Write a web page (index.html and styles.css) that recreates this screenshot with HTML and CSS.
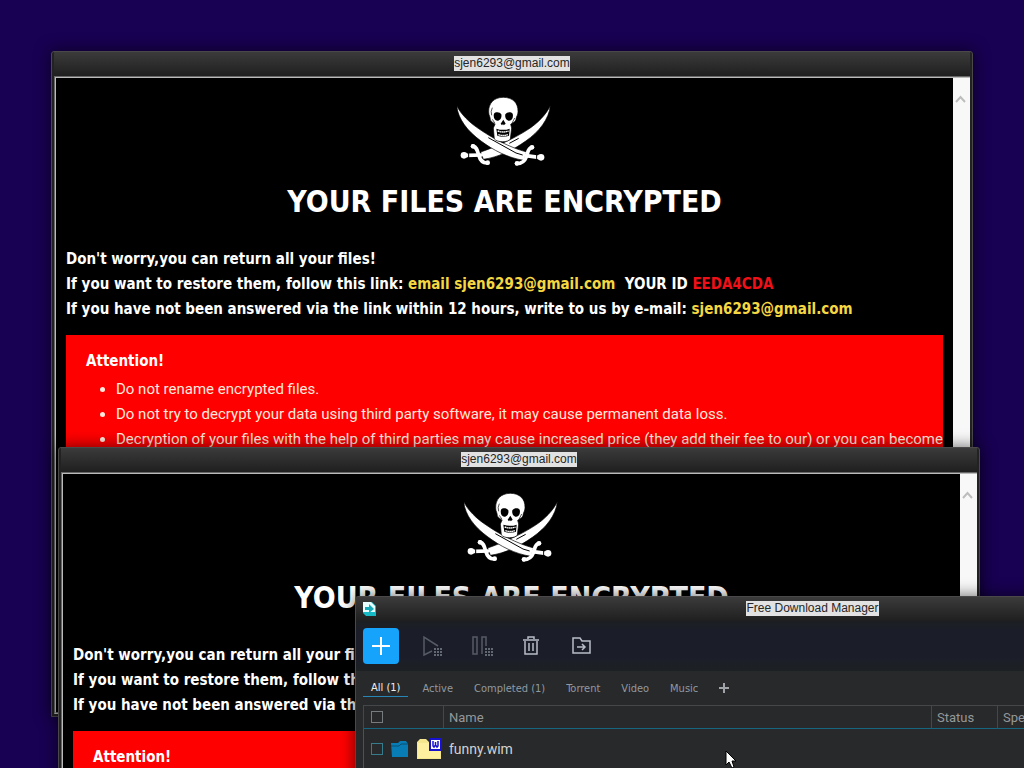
FILE: index.html
```html
<!DOCTYPE html>
<html lang="en">
<head>
    <meta charset="UTF-8">
    <meta name="viewport" content="width=device-width, initial-scale=1.0">
    <title>Desktop</title>
    <link rel="stylesheet" href="styles.css">
</head>
<body>
    <!-- Shared drawings -->
    <svg class="defs" aria-hidden="true">
        <symbol id="skull" viewBox="49 145 288 216">
            <g fill="#fff" stroke="#000" stroke-width="2">
                <path d="M329 174C318 198 292 227 258 248C224 270 168 297 120 313L128 335C172 329 218 307 254 281C296 252 325 214 329 174Z"/>
                <path d="M48 174C60 198 84 224 120 247C155 271 208 300 258 313L250 338C202 331 157 307 121 280C80 250 52 214 48 174Z"/>
            </g>
            <path d="M143 270L226 316L246 322" fill="none" stroke="#000" stroke-width="3"/>
            <path d="M234 272L206 287" fill="none" stroke="#000" stroke-width="3"/>
            <g fill="none" stroke="#fff" stroke-linecap="round">
                <path d="M78 323L122 322M256 324L294 329" stroke-width="11"/>
                <path d="M97 295C109 299 110 309 114 322C118 337 127 347 141 346" stroke-width="11"/>
                <path d="M274 299C260 302 263 314 257 328C252 342 242 348 228 348" stroke-width="11"/>
            </g>
            <path d="M84 315V331M288 320V336" stroke="#000" stroke-width="3"/>
            <g fill="#fff">
                <circle cx="70" cy="323" r="10"/>
                <circle cx="301" cy="329" r="10"/>
                <circle cx="97" cy="296" r="7"/>
                <circle cx="274" cy="299" r="7"/>
                <circle cx="141" cy="345" r="7"/>
                <circle cx="229" cy="347" r="7"/>
            </g>
            <path d="M188 149C159 149 143 168 144 193C144 203 149 207 149 216C150 223 160 224 163 230L158 241L161 274C170 285 202 285 209 274L213 241L210 230C216 225 225 223 226 215C227 205 232 203 232 192C233 166 216 149 188 149Z" fill="#fff" stroke="#000" stroke-width="2"/>
            <path d="M160 198C164 192 178 192 182 200C184 209 179 219 170 219C162 219 157 209 160 198ZM194 200C199 192 211 192 216 198C219 209 214 219 206 219C197 219 192 209 194 200ZM188 216L195 228L189 233L187 229L184 233L180 228Z"/>
            <path d="M167 243Q188 250 207 243L205 264Q188 270 170 264Z"/>
            <path d="M171 250Q188 256 204 250M173 261Q188 266 202 261" fill="none" stroke="#fff" stroke-width="4" stroke-dasharray="5 1"/>
            <path d="M155 180Q149 191 153 203M222 211L214 227M155 215L163 227" fill="none" stroke="#000" stroke-width="2"/>
        </symbol>
        <symbol id="dots" viewBox="0 0 9 9">
            <path d="M0 1h9M0 4h9M0 7h9" stroke="#636973" stroke-width="2" stroke-dasharray="2 1"/>
        </symbol>
    </svg>

    <main class="desktop">
        <section class="window note note-back">
            <header class="titlebar"><span>sjen6293@gmail.com</span></header>
            <div class="note-view">
                <article class="note-page">
                    <svg class="skull"><use href="#skull"/></svg>
                    <h1>YOUR FILES ARE ENCRYPTED</h1>
                    <div class="intro">
                        <p>Don't worry,you can return all your files!</p>
                        <p>If you want to restore them, follow this link: <a href="#">email sjen6293@gmail.com</a> &nbsp;YOUR ID <span class="id">EEDA4CDA</span></p>
                        <p>If you have not been answered via the link within 12 hours, write to us by e-mail: <a href="#">sjen6293@gmail.com</a></p>
                    </div>
                    <div class="attention">
                        <h2>Attention!</h2>
                        <ul>
                            <li>Do not rename encrypted files.</li>
                            <li>Do not try to decrypt your data using third party software, it may cause permanent data loss.</li>
                            <li>Decryption of your files with the help of third parties may cause increased price (they add their fee to our) or you can become</li>
                        </ul>
                    </div>
                </article>
                <div class="scrollbar">
                    <svg width="11" height="8" viewBox="0 0 11 8"><path d="M1 7L5.500 2L10 7" fill="none" stroke="#bdbdbd" stroke-width="2"/></svg>
                </div>
            </div>
        </section>

        <section class="window note note-front">
            <header class="titlebar"><span>sjen6293@gmail.com</span></header>
            <div class="note-view">
                <article class="note-page">
                    <svg class="skull"><use href="#skull"/></svg>
                    <h1>YOUR FILES ARE ENCRYPTED</h1>
                    <div class="intro">
                        <p>Don't worry,you can return all your files!</p>
                        <p>If you want to restore them, follow this</p>
                        <p>If you have not been answered via the</p>
                    </div>
                    <div class="attention">
                        <h2>Attention!</h2>
                    </div>
                </article>
                <div class="scrollbar">
                    <svg width="11" height="8" viewBox="0 0 11 8"><path d="M1 7L5.500 2L10 7" fill="none" stroke="#bdbdbd" stroke-width="2"/></svg>
                </div>
            </div>
        </section>

        <section class="window manager">
            <header class="titlebar">
                <svg class="app-icon" width="13" height="14" viewBox="0 0 13 14">
                    <path d="M0 0H9L13 4V14H3L0 11Z" fill="#16b9c4"/>
                    <path d="M0 0H8L12 4V10H0Z" fill="#e8ffff"/>
                    <path d="M2 5H6V2L11 7L6 11V8H2Z" fill="#16aab8"/>
                </svg>
                <span>Free Download Manager</span>
            </header>
            <div class="toolbar">
                <button class="add" aria-label="Add download">
                    <svg width="18" height="18" viewBox="0 0 18 18"><path d="M9 0V18M0 9H18" stroke="#fff" stroke-width="2"/></svg>
                </button>
                <button aria-label="Start">
                    <svg width="22" height="22" viewBox="0 0 22 22"><path d="M10 16L2 20V2L16 11" fill="none" stroke="#565b65" stroke-width="1.500"/><use href="#dots" x="12" y="13" width="9" height="9"/></svg>
                </button>
                <button aria-label="Pause">
                    <svg width="22" height="22" viewBox="0 0 22 22"><path d="M1 2H5V19H1ZM10 19V2H14V11" fill="none" stroke="#565b65" stroke-width="1.500"/><use href="#dots" x="13" y="13" width="9" height="9"/></svg>
                </button>
                <button aria-label="Delete">
                    <svg width="22" height="22" viewBox="0 0 22 22"><path d="M1 5H17M6 4V2H12V4M3 6V19H15V6M7 8V16M11 8V16" fill="none" stroke="#b8bdc6" stroke-width="1.500"/></svg>
                </button>
                <button aria-label="Move to folder">
                    <svg width="22" height="22" viewBox="0 0 22 22"><path d="M1 18V3H8L10 6H18V18ZM5 12H13M10 9L13 12L10 15" fill="none" stroke="#b8bdc6" stroke-width="1.500"/></svg>
                </button>
            </div>
            <nav class="tabs">
                <button class="active">All (1)</button>
                <button>Active</button>
                <button>Completed (1)</button>
                <button>Torrent</button>
                <button>Video</button>
                <button>Music</button>
                <button aria-label="Add tab"><svg width="10" height="10" viewBox="0 0 10 10"><path d="M5 0V10M0 5H10" stroke="#a0a4a8" stroke-width="2"/></svg></button>
            </nav>
            <table class="downloads">
                <thead>
                    <tr>
                        <th class="pick"><input type="checkbox" aria-label="Select all"></th>
                        <th class="name">Name</th>
                        <th class="status">Status</th>
                        <th>Speed</th>
                    </tr>
                </thead>
                <tbody>
                    <tr>
                        <td>
                            <div class="icons">
                                <input type="checkbox" aria-label="Select funny.wim">
                                <svg width="18" height="16" viewBox="0 0 18 16"><path d="M0 2H7L9 0H15L17 3V16H1Z" fill="#087cb4"/><path d="M0 5H8L10 3H17" fill="none" stroke="#075073" stroke-width="1"/></svg>
                                <svg width="25" height="22" viewBox="0 0 25 22"><path d="M0 4L3 1H9L12 4H24V21H0Z" fill="#f6e68d"/><path d="M1 5H23V20H1Z" fill="#fff0a0"/><path d="M13 1H24V12H13Z" fill="#fff" stroke="#1812cf" stroke-width="2"/><path d="M16 3V8L17 9L18.500 7L20 9L21 8V3M18.500 4V7" fill="none" stroke="#1812cf" stroke-width="1.500"/></svg>
                            </div>
                        </td>
                        <td class="file">funny.wim</td>
                        <td></td>
                        <td></td>
                    </tr>
                </tbody>
            </table>
        </section>

        <svg class="cursor" width="12" height="19" viewBox="0 0 12 19"><path d="M1 1V15L4 12L7 18L9 17L7 11H11Z" fill="#fff" stroke="#000" stroke-width="1"/></svg>
    </main>
</body>
</html>
```
FILE: styles.css
```css
* {
    box-sizing: border-box;
}

body {
    margin: 0;
    font-family: "DejaVu Sans Condensed", "DejaVu Sans", sans-serif;
    background: #180052;
}

h1, h2, p, ul {
    margin: 0;
}

svg {
    display: block;
    flex-shrink: 0;
}

button {
    padding: 0;
    border: none;
    background: none;
    font-family: inherit;
}

.defs {
    position: absolute;
    width: 0;
    height: 0;
}

.desktop {
    position: relative;
    height: 100vh;
    overflow: hidden;
}

/* Windows */
.window {
    position: absolute;
    display: flex;
    flex-direction: column;
    border: 1px solid #4a4848;
    border-radius: 3px 3px 0 0;
    background: #222;
    box-shadow: 0 0 16px rgba(0, 0, 0, 0.6);
}

.titlebar {
    display: flex;
    flex-shrink: 0;
    align-items: center;
    justify-content: center;
    height: 24px;
    padding-bottom: 2px;
    background: linear-gradient(#3b3b3b, #1f1f1f);
    font-family: "Liberation Sans", Arial, sans-serif;
    font-size: 12px;
    line-height: 15px;
}

.titlebar span {
    background: #e2e2e2;
    color: #262626;
}

.note {
    width: 922px;
    height: 666px;
    padding: 0 2px 2px;
}

.note-back {
    left: 51px;
    top: 51px;
}

.note-front {
    left: 58px;
    top: 447px;
}

/* Note page */
.note-view {
    display: flex;
    flex: 1;
    min-height: 0;
    border: 2px groove #bbb;
    border-right: none;
    background: #000;
}

.note-page {
    flex: 1;
    min-width: 0;
    padding: 18px 10px;
    color: #fff;
}

.skull {
    width: 96px;
    height: 72px;
    margin: 0 auto;
}

h1 {
    margin-top: 14px;
    font-size: 30px;
    line-height: 40px;
    text-align: center;
}

.intro {
    margin: 25px 0 13px;
    font-size: 15px;
    font-weight: bold;
    line-height: 25px;
}

.intro a {
    color: #f5d742;
    text-decoration: none;
}

.id {
    color: #f01018;
}

.attention {
    min-height: 300px;
    padding: 14px 0 14px 20px;
    background: #f00;
    font-size: 15px;
    line-height: 25px;
}

.attention h2 {
    font-size: 15px;
}

.attention ul {
    margin-top: 3px;
    padding-left: 30px;
    color: #ffe9dc;
    font-family: Roboto, sans-serif;
    white-space: nowrap;
}

.scrollbar {
    width: 17px;
    padding: 17px 2px;
    background: #f8f8f8;
}

/* Download manager */
.manager {
    left: 355px;
    top: 596px;
    width: 915px;
    height: 480px;
    background: #27292a;
    color: #9a9da0;
}

.manager .titlebar {
    position: relative;
}

.app-icon {
    position: absolute;
    left: 7px;
    top: 5px;
}

.toolbar {
    display: flex;
    align-items: center;
    gap: 28px;
    height: 50px;
    padding-left: 7px;
    background: linear-gradient(#1c1f21, #1b1e29 20%, #1b1e29 70%, #1d2123);
}

.toolbar .add {
    display: flex;
    align-items: center;
    justify-content: center;
    width: 36px;
    height: 36px;
    margin-right: -5px;
    border-radius: 4px;
    background: #16a3fb;
}

.tabs {
    display: flex;
    align-items: center;
    gap: 21px;
    height: 34px;
    padding-left: 7px;
}

.tabs button {
    height: 18px;
    color: #9299a0;
    font-size: 11px;
}

.tabs .active {
    margin-right: -7px;
    padding: 0 8px;
    border-bottom: 1px solid #2786b5;
    color: #eee;
}

.downloads {
    margin-left: 7px;
    border-top: 1px solid #45484a;
    border-spacing: 0;
    table-layout: fixed;
    font-family: Roboto, sans-serif;
    font-size: 14px;
}

.downloads th {
    height: 23px;
    padding: 0 5px;
    border-left: 1px solid #45484a;
    border-bottom: 1px solid #176681;
    color: #95989a;
    font-size: 13px;
    font-weight: normal;
    text-align: left;
}

.downloads td {
    height: 40px;
    padding: 0 6px;
}

.downloads .pick {
    width: 80px;
    padding-left: 7px;
}

.downloads .name {
    width: 488px;
}

.downloads .status {
    width: 66px;
}

.downloads td:first-child {
    padding: 0 0 0 7px;
    border-left: 1px solid #176681;
}

.downloads .file {
    color: #d2d2d2;
}

.downloads input {
    appearance: none;
    display: block;
    width: 12px;
    height: 12px;
    margin: 0;
    border: 1px solid #777b7d;
}

.icons {
    display: flex;
    align-items: center;
    gap: 8px;
}

.downloads td input {
    border-color: #367c8c;
}

.cursor {
    position: absolute;
    left: 725px;
    top: 750px;
}
```
